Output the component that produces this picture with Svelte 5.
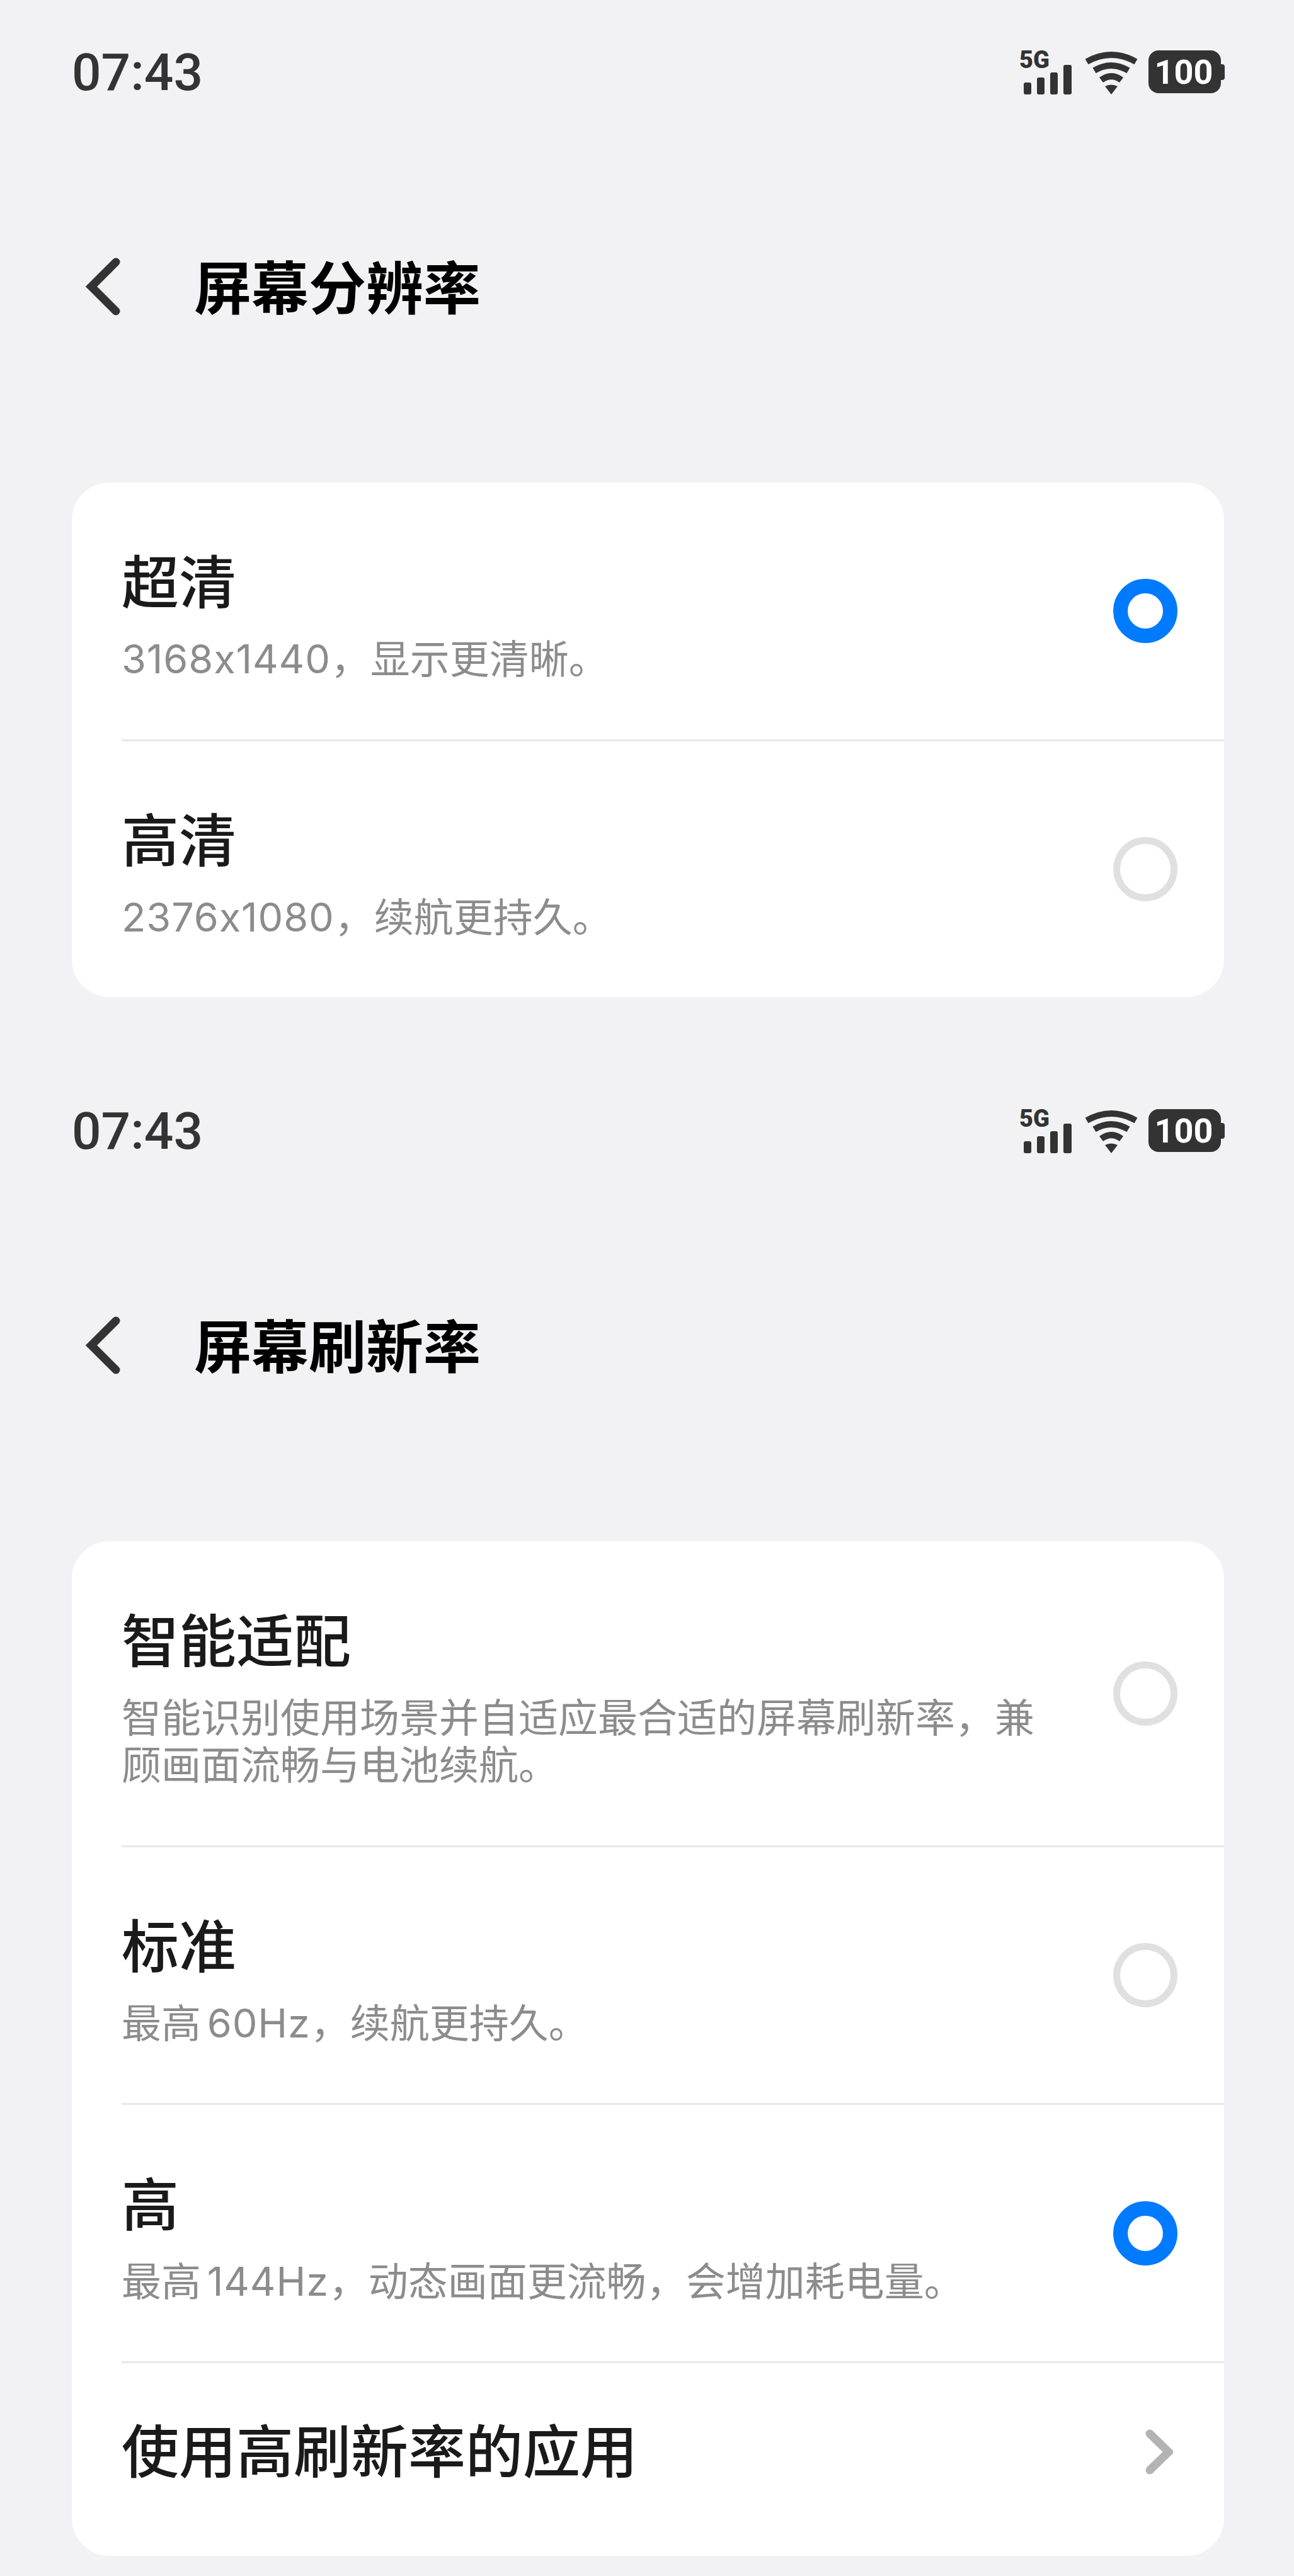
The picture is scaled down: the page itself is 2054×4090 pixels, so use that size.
<script>
  const screens = [
    {
      title: '屏幕分辨率',
      rows: [
        { name: '超清', num: '3168x1440', desc: '，显示更清晰。', on: true, h: 408 },
        { name: '高清', num: '2376x1080', desc: '，续航更持久。', on: false, h: 409 }
      ]
    },
    {
      title: '屏幕刷新率',
      rows: [
        { name: '智能适配', desc: '智能识别使用场景并自适应最合适的屏幕刷新率，兼顾画面流畅与电池续航。', on: false, h: 483 },
        { name: '标准', pre: '最高 ', num: '60Hz', desc: '，续航更持久。', on: false, h: 409 },
        { name: '高', pre: '最高 ', num: '144Hz', desc: '，动态画面更流畅，会增加耗电量。', on: true, h: 410 },
        { name: '使用高刷新率的应用', link: true, h: 309 }
      ]
    }
  ];
</script>

{#snippet statusIcons()}
  <svg class="status-icons" width="340" height="90" viewBox="1610 70 340 90" fill="#333">
    <text x="1618" y="108" class="net">5G</text>
    <rect x="1625" y="131" width="12" height="19" rx="3" />
    <rect x="1646" y="123" width="12" height="27" rx="3" />
    <rect x="1667" y="115" width="12" height="35" rx="3" />
    <rect x="1688" y="103" width="13" height="47" rx="3" />
    <g fill="none" stroke="#333" stroke-width="10">
      <path d="M1725 98Q1764 76 1803 98" />
      <path d="M1737 112Q1764 96 1791 112" />
      <path d="M1748 127Q1764 115 1780 127" />
    </g>
    <path d="M1754 137Q1764 132 1774 137L1764 150Z" />
    <rect x="1823" y="80" width="115" height="68" rx="16" />
    <path d="M1938 102h2a4 4 0 0 1 4 4v17a4 4 0 0 1-4 4h-2z" />
    <text x="1879" y="133" text-anchor="middle" class="level">100</text>
  </svg>
{/snippet}

<div class="page">
  {#each screens as screen}
    <section class="screen">
      <div class="status">
        <span class="time">07:43</span>
        {@render statusIcons()}
      </div>
      <header class="header">
        <svg class="back" width="60" height="96" viewBox="0 0 60 96">
          <path d="M50 10L11 49L50 88" fill="none" stroke="#333" stroke-width="13" stroke-linecap="round" stroke-linejoin="miter" />
        </svg>
        <h1>{screen.title}</h1>
      </header>
      <div class="card">
        {#each screen.rows as row}
          <div class="row" class:link={row.link} style="height: {row.h}px">
            <div class="text">
              <div class="name">{row.name}</div>
              {#if row.desc}
                <div class="desc">{row.pre ?? ''}{#if row.num}<span class="num">{row.num}</span>{/if}{row.desc}</div>
              {/if}
            </div>
            {#if row.link}
              <svg class="more" width="44" height="74" viewBox="0 0 44 74">
                <path d="M7 8L37 37L7 66" fill="none" stroke="#b3b3b3" stroke-width="13" stroke-linecap="round" stroke-linejoin="miter" />
              </svg>
            {:else}
              <span class="radio" class:on={row.on}></span>
            {/if}
          </div>
        {/each}
      </div>
    </section>
  {/each}
</div>

<style>
  :global(body) {
    margin: 0;
    background: #f2f2f4;
  }

  .page {
    width: 2054px;
    height: 4090px;
    overflow: hidden;
    font-family: Roboto, "Noto Sans CJK SC", sans-serif;
    color: #1a1a1a;
  }

  .screen + .screen {
    margin-top: 98px;
  }

  .status {
    height: 230px;
    display: flex;
    align-items: center;
    justify-content: space-between;
    padding: 0 104px 0 114px;
  }

  .time {
    font-size: 82px;
    font-weight: 500;
    color: #333;
  }

  .status-icons {
    display: block;
  }

  .net {
    font-size: 38px;
    font-weight: 900;
  }

  .level {
    font-size: 54px;
    font-weight: 700;
    fill: #fff;
  }

  .header {
    height: 224px;
    margin: 115px 0 197px;
    display: flex;
    align-items: center;
    padding: 0 0 6px 134px;
    box-sizing: border-box;
  }

  .back {
    display: block;
  }

  h1 {
    margin: 0 0 6px 114px;
    font-size: 91px;
    font-weight: 700;
    color: #000;
  }

  .card {
    margin: 0 111px 0 114px;
    background: #fff;
    border-radius: 60px;
    overflow: hidden;
  }

  .row {
    box-sizing: border-box;
    display: flex;
    align-items: center;
    justify-content: space-between;
    margin-left: 79px;
    padding-right: 74px;
    border-top: 3px solid #e8e8e8;
  }

  .row:first-child {
    border-top: none;
  }

  .text {
    width: 1470px;
    padding-top: 10px;
  }

  .link .text {
    padding: 0 0 20px;
  }

  .name {
    font-size: 91px;
    line-height: 122px;
    font-weight: 500;
  }

  .desc {
    margin-top: 21px;
    font-family: Inter, "Noto Sans CJK SC", sans-serif;
    font-feature-settings: "calt" 0;
    word-spacing: -8px;
    font-size: 63px;
    line-height: 75px;
    color: #8c8c8c;
  }

  .num {
    letter-spacing: 0.9px;
  }

  .radio {
    box-sizing: border-box;
    width: 102px;
    height: 102px;
    border-radius: 50%;
    border: 11px solid #e0e0e0;
  }

  .radio.on {
    border: 23px solid #007aff;
  }

  .more {
    display: block;
    margin: 0 7px 25px 0;
  }
</style>
